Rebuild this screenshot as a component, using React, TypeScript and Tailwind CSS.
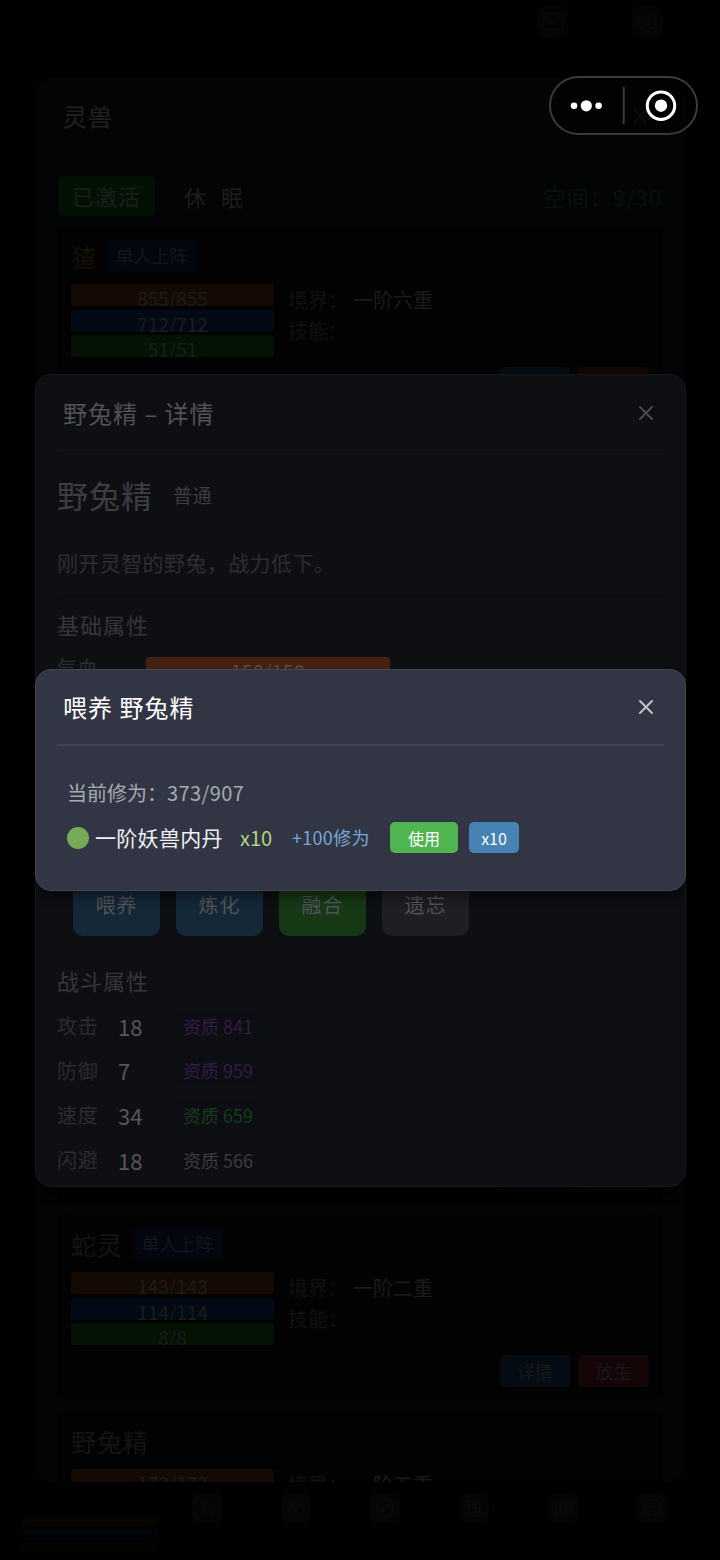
import { Compass, Mail, Map, Package, ScrollText, Settings, Store, User, X } from "lucide-react";

const beasts = [
  { name: "猹", tag: "单人上阵", color: "text-[#171003]", hp: "855/855", mp: "712/712", xp: "51/51", realm: "一阶六重" },
  { name: "蛇灵", tag: "单人上阵", color: "text-[#141414]", hp: "143/143", mp: "114/114", xp: "8/8", realm: "一阶二重" },
  { name: "野兔精", tag: "", color: "text-[#141414]", hp: "173/173", mp: "", xp: "", realm: "一阶五重" },
];

const stats = [
  { label: "攻击", value: "18", talent: "资质 841", color: "text-[#351b46]" },
  { label: "防御", value: "7", talent: "资质 959", color: "text-[#351b46]" },
  { label: "速度", value: "34", talent: "资质 659", color: "text-[#163d18]" },
  { label: "闪避", value: "18", talent: "资质 566", color: "text-[#3b3d3e]" },
];

const actions = [
  { label: "喂养", bg: "bg-[#152838]" },
  { label: "炼化", bg: "bg-[#152838]" },
  { label: "融合", bg: "bg-[#173815]" },
  { label: "遗忘", bg: "bg-[#1e1f22]" },
];

const navIcons = [User, Package, Compass, ScrollText, Map, Store];

const BeastCard = ({ beast }: { beast: (typeof beasts)[number] }) => (
  <div className="flex h-[184px] shrink-0 flex-col rounded-lg bg-[#020203] px-[13px] pt-[13px] pb-3">
    <div className="flex h-8 items-center gap-[10px]">
      <span className={`text-[25px] tracking-[1px] leading-8 ${beast.color}`}>{beast.name}</span>
      {beast.tag && (
        <span className="h-8 w-[89px] rounded bg-[#03060f] text-center text-[18px] leading-[31px] text-[#14171b]">
          {beast.tag}
        </span>
      )}
    </div>
    <div className="mt-3 flex gap-[14px]">
      <div className="flex w-[203px] shrink-0 flex-col gap-[3.5px] text-center text-[19px] leading-[27px] text-[#1c1c1c]">
        <div className="h-[22px] overflow-hidden rounded-[3px] bg-[#150903]">{beast.hp}</div>
        <div className="h-[22px] overflow-hidden rounded-[3px] bg-[#030a15]">{beast.mp}</div>
        <div className="h-[22px] overflow-hidden rounded-[3px] bg-[#041204]">{beast.xp}</div>
      </div>
      <div className="text-[20px] leading-[31px] text-[#111111]">
        <div className="flex">
          <span className="w-[65px]">境界：</span>
          <span className="text-[#1b1b1b]">{beast.realm}</span>
        </div>
        <div>技能：</div>
      </div>
    </div>
    <div className="mt-auto flex justify-end gap-2 text-center text-[18px] leading-8 text-[#17191b]">
      <span className="h-8 w-[70px] rounded bg-[#040b12]">详情</span>
      <span className="h-8 w-[71px] rounded bg-[#140506]">放生</span>
    </div>
  </div>
);

const Capsule = () => (
  <svg className="absolute top-[76px] left-[549px]" width="149" height="59" viewBox="0 0 149 59" fill="none">
    <rect x="1" y="1" width="147" height="57" rx="28.5" fill="#000" fillOpacity="0.3" stroke="#3b3b3c" strokeWidth="2" />
    <circle cx="25" cy="29.8" r="3.3" fill="#fff" />
    <circle cx="37.3" cy="29.8" r="5.6" fill="#fff" />
    <circle cx="49.6" cy="29.8" r="3.3" fill="#fff" />
    <path d="M74.7 11v37" stroke="#3b3b3c" strokeWidth="2" />
    <circle cx="112" cy="29.7" r="13.7" stroke="#fff" strokeWidth="3" />
    <circle cx="112" cy="29.7" r="6.2" fill="#fff" />
  </svg>
);

const BeastList = () => (
  <div className="mx-auto flex h-[1404px] w-[650px] shrink-0 flex-col overflow-hidden rounded-[16px] bg-[#030406] px-[23px]">
    <div className="flex h-[76px] shrink-0 items-center justify-between pr-[10px] pl-[5px] text-[24px] tracking-[1px] text-[#202122]">
      灵兽
      <X className="size-6 text-[#111214]" />
    </div>
    <div className="mt-[22px] flex h-10 shrink-0 items-center text-[22px] tracking-[1px] text-[#1b1e1e]">
      <span className="h-10 w-[97px] rounded bg-[#031004] text-center leading-[39px] text-[#182019]">已激活</span>
      <span className="ml-[29px] tracking-[2px]">休&ensp;眠</span>
      <span className="ml-auto text-[#071309]">空间：9/30</span>
    </div>
    <div className="mt-[11px] flex flex-col gap-[13px]">
      <BeastCard beast={beasts[0]} />
      <div className="flex h-[778px] shrink-0 items-end justify-end gap-2 rounded-lg bg-[#020203] px-[13px] pb-3">
        <div className="h-8 w-[70px] rounded bg-[#040a10]" />
        <div className="h-8 w-[71px] rounded bg-[#0c0405]" />
      </div>
      <BeastCard beast={beasts[1]} />
      <BeastCard beast={beasts[2]} />
    </div>
  </div>
);

const DetailModal = () => (
  <div className="absolute top-[374px] left-[35px] h-[813px] w-[651px] overflow-hidden rounded-[16px] border border-[#17181c] bg-[#0e0f13] px-[21px] shadow-[0_8px_8px_rgba(0,0,0,0.6)]">
    <div className="flex h-[76px] items-center justify-between border-b border-[#15161a] pr-[6px] pl-[6px] text-[24px] tracking-[1px] text-[#515254]">
      <span>野兔精 – 详情</span>
      <X className="size-6 text-[#4a4a4b]" />
    </div>
    <div className="flex h-[82px] items-center border-b border-[#101115] pt-2 text-[#3d3e41]">
      <span className="text-[31px] tracking-[1px]">野兔精</span>
      <span className="ml-5 text-[19px] tracking-[0.5px]">普通</span>
    </div>
    <div className="flex h-[60px] items-center border-b border-[#111216] text-[21px] tracking-[0.4px] text-[#2d2e32]">
      刚开灵智的野兔，战力低下。
    </div>
    <div className="flex h-[62px] items-center text-[22px] tracking-[1px] text-[#36373a]">基础属性</div>
    <div className="flex h-[26px] items-center text-[20px] tracking-[0.5px] text-[#2d2e32]">
      <span className="w-[89px]">气血</span>
      <span className="h-[22px] w-[244px] rounded-[3px] bg-[#43200f] text-center text-[19px] leading-[27px] text-[#664839]">
        150/150
      </span>
    </div>
    <div className="mt-[194px] ml-4 flex gap-4">
      {actions.map((action) => (
        <div
          key={action.label}
          className={`h-[61px] w-[87px] rounded-[10px] text-center text-[20px] leading-[60px] tracking-[1px] text-[#505457] ${action.bg}`}
        >
          {action.label}
        </div>
      ))}
    </div>
    <div className="mt-[28px] h-8 text-[22px] leading-8 tracking-[1px] text-[#36373a]">战斗属性</div>
    <div className="mt-[8px]">
      {stats.map((stat) => (
        <div key={stat.label} className="flex h-[44.6px] items-center">
          <span className="w-[61px] text-[20px] tracking-[0.7px] text-[#2b2c30]">{stat.label}</span>
          <span className="w-[58px] text-[22px] text-[#555659]">{stat.value}</span>
          <span className={`rounded bg-[#0c0e13] px-[7px] py-px text-[18px] ${stat.color}`}>{stat.talent}</span>
        </div>
      ))}
    </div>
  </div>
);

const FeedModal = () => (
  <div className="absolute top-[669px] left-[35px] h-[222px] w-[651px] rounded-[16px] border border-[#424652] bg-[#323644] px-[21px] shadow-[0_8px_8px_rgba(0,0,0,0.35)]">
    <div className="flex h-[76px] items-center justify-between border-b-2 border-[#424550] pr-[6px] pl-[6px] text-[24px] tracking-[1px] text-white">
      <span>喂养 野兔精</span>
      <X className="size-6 text-[#c4c4c6]" />
    </div>
    <div className="mt-8 px-[10px] text-[20px] leading-[30px] text-[#a7a9ae]">
      当前修为：<span className="tracking-[0.4px]">373/907</span>
    </div>
    <div className="mt-[14px] flex h-[31px] items-center px-[10px]">
      <span className="mr-[6px] size-[22px] rounded-full bg-[#76aa57]" />
      <span className="w-[145px] text-[21px] tracking-[0.3px] text-[#f2f2f4]">一阶妖兽内丹</span>
      <span className="w-[52px] text-[20px] text-[#aed581]">x10</span>
      <span className="w-[98px] text-[18px] tracking-[0.3px] text-[#77a6db]">+100修为</span>
      <button className="mr-[11px] h-[31px] w-[68px] rounded-[5px] bg-[#50b450] text-[16px] text-white">使用</button>
      <button className="h-[31px] w-[50px] rounded-[5px] bg-[#4682b4] text-[16px] text-white">x10</button>
    </div>
  </div>
);

const App = () => {
  return (
    <div className="relative flex h-[1560px] w-[720px] flex-col overflow-hidden bg-black font-['Noto_Sans_CJK_SC',sans-serif]">
      <div className="flex h-[78px] shrink-0 items-start justify-end gap-[62px] pt-[6px] pr-[57px] text-[#080808]">
        <div className="grid size-8 place-items-center rounded-lg bg-[#040404]">
          <Mail className="size-6" />
        </div>
        <div className="grid size-8 place-items-center rounded-lg bg-[#040404]">
          <Settings className="size-6" />
        </div>
      </div>
      <BeastList />
      <div className="flex grow items-start pt-[11px] pl-[22px]">
        <div className="mt-[23px] flex w-[136px] flex-col gap-[3px]">
          <div className="h-[10px] bg-[#070301]" />
          <div className="h-[10px] bg-[#010307]" />
          <div className="h-[10px] bg-[#010401]" />
        </div>
        <div className="ml-[34px] flex gap-[59px]">
          {navIcons.map((Icon, i) => (
            <div key={i} className="grid size-[30px] place-items-center rounded-lg bg-[#050505]">
              <Icon className="size-5 text-[#0a0a0a]" />
            </div>
          ))}
        </div>
      </div>
      <DetailModal />
      <FeedModal />
      <Capsule />
    </div>
  );
};

export default App;
